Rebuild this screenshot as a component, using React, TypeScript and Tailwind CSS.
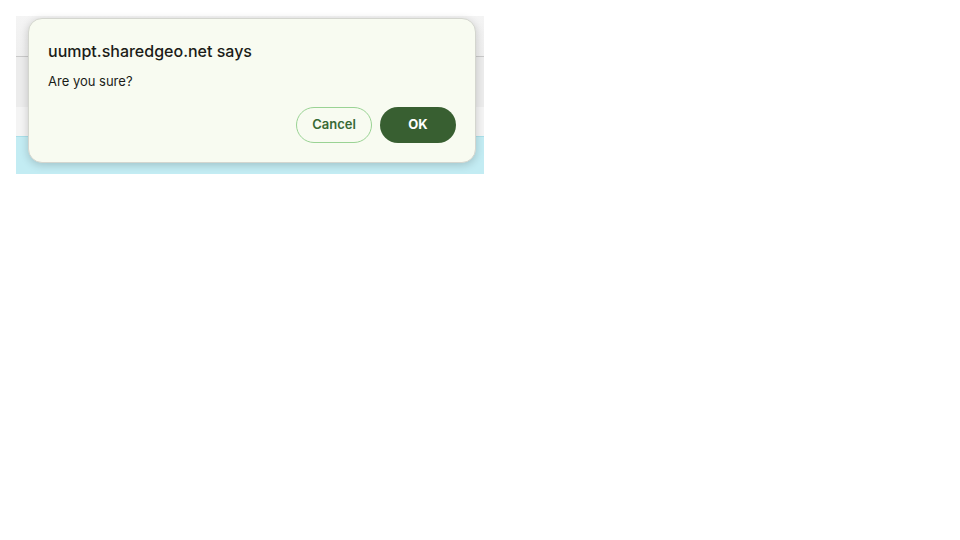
export default function App() {
  return (
    <div className="relative h-[540px] w-[960px] bg-white pl-4 pt-4 font-['Inter',sans-serif]">
      {/* page behind the dialog */}
      <div className="flex w-[468px] flex-col">
        <div className="h-[41px] bg-gradient-to-b from-[#f4f4f4] to-[#efefef] border-b border-[#c9c9c9]" />
        <div className="h-[50px] bg-[#ececec]" />
        <div className="h-[29px] bg-[#f4f4f4]" />
        <div className="h-[38px] border-t border-[#a9dfe9] bg-[#c3ecf3]" />
      </div>

      {/* confirm dialog */}
      <div className="absolute left-7 top-[18px] flex h-[145px] w-[448px] flex-col rounded-[14px] border border-[#d4d6cf] bg-[#f8fbf1] pl-[19px] pr-[19px] pt-[22px] shadow-[0_2px_8px_rgba(0,0,0,0.18)]">
        <h1 className="text-[16px] font-medium leading-5 text-[#1b1c18]">uumpt.sharedgeo.net says</h1>
        <p className="mt-[12px] text-[13px] leading-4 text-[#1b1c18]">Are you sure?</p>
        <div className="mt-[18px] flex justify-end gap-2">
          <button className="h-9 w-[76px] rounded-full border border-[#9ad394] text-[13px] font-semibold text-[#386a35]">
            Cancel
          </button>
          <button className="h-9 w-[76px] rounded-full bg-[#385f31] text-[13px] font-bold text-white">
            OK
          </button>
        </div>
      </div>
    </div>
  );
}
